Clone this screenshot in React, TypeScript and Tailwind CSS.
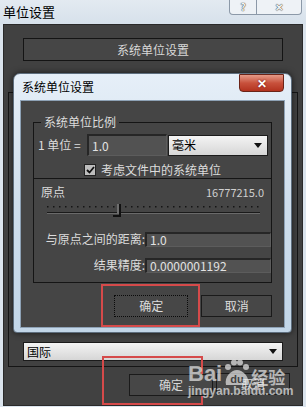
import React from 'react';

const font = { fontFamily: '"Noto Sans CJK SC", "Liberation Sans", sans-serif' };

const Dropdown: React.FC<{ label: string; className?: string }> = ({ label, className }) => (
  <div
    className={`flex items-center justify-between border border-[#1b1b1b] bg-gradient-to-b from-[#f4f4f4] to-[#d6d6d6] pl-[3px] pr-[5px] text-[12px] leading-none text-black ${className ?? ''}`}
  >
    <span>{label}</span>
    <svg width="8" height="5" viewBox="0 0 8 5">
      <path d="M0 0 H8 L4 5 Z" fill="#111" />
    </svg>
  </div>
);

const Field: React.FC<{ value: string; className?: string }> = ({ value, className }) => (
  <div
    className={`flex items-center border-t-2 border-l-2 border-[#262626] border-b border-r border-b-[#5c5c5c] border-r-[#5c5c5c] bg-[#525252] pl-[3px] text-[12px] leading-none text-[#e2e2e2] ${className ?? ''}`}
  >
    {value}
  </div>
);

const Slider: React.FC = () => (
  <svg width="220" height="16" viewBox="0 0 220 16" className="block">
    {Array.from({ length: 36 }).map((_, i) => (
      <rect key={i} x={i * 6} y={2} width="1.5" height="1.5" fill="#151515" />
    ))}
    <line x1="0" y1="8.5" x2="213" y2="8.5" stroke="#1a1a1a" strokeWidth="1" />
    <line x1="0" y1="9.5" x2="213" y2="9.5" stroke="#6a6a6a" strokeWidth="1" />
    <rect x="70" y="0" width="4" height="13" fill="#444" />
    <path d="M73 0 V12 H66" stroke="#111" strokeWidth="2" fill="none" />
    <path d="M71 0 V10" stroke="#9a9a9a" strokeWidth="1" fill="none" />
  </svg>
);

const InnerDialog: React.FC = () => (
  <div className="absolute left-[13px] top-[73px] flex h-[260px] w-[279px] flex-col rounded-t-[7px] rounded-b-[4px] border border-[#5e6e7e] bg-gradient-to-b from-[#e6eff8] via-[#cfdeec] to-[#c2d6e8] shadow-[0_0_6px_rgba(0,0,0,0.6)]">
    <div className="relative flex h-[26px] shrink-0 items-center pl-[8px] text-[12px] text-black">
      系统单位设置
      <div className="absolute right-[7px] top-[0px] flex h-[18px] w-[45px] items-center justify-center rounded-b-[4px] border border-[#6b2418] bg-gradient-to-b from-[#e59a88] via-[#c8513c] to-[#b3321e]">
        <span className="text-[12px] font-bold leading-none text-white [text-shadow:0_0_2px_#600]">✕</span>
      </div>
    </div>
    <div className="mx-[6px] mb-[6px] flex flex-1 flex-col border border-[#8ea2b6] bg-[#454545] px-[12px] pt-[21px] text-[#dcdcdc]">
      <div className="relative border border-[#151515] px-[3px] pb-[2px] pt-[11px]">
        <span className="absolute left-[7px] top-[-9px] bg-[#454545] px-[3px] text-[12px] leading-[16px]">
          系统单位比例
        </span>
        <div className="flex items-center">
          <span className="w-[50px] pl-[1px] text-[12px]">1 单位 =</span>
          <Field value="1.0" className="h-[22px] w-[80px]" />
          <Dropdown label="毫米" className="ml-[1px] h-[21px] w-[100px]" />
        </div>
        <div className="mt-[8px] flex items-center pl-[47px] text-[12px]">
          <span className="flex h-[12px] w-[12px] items-center justify-center border border-[#222] bg-[#bdbdbd]">
            <svg width="9" height="8" viewBox="0 0 9 8">
              <path d="M1 4 L3.5 6.5 L8 1" stroke="#111" strokeWidth="1.8" fill="none" />
            </svg>
          </span>
          <span className="ml-[5px] leading-none">考虑文件中的系统单位</span>
        </div>
      </div>
      <div className="border border-t-0 border-[#151515] pb-[8px] pt-[4px]">
        <div className="flex items-center justify-between pl-[7px] pr-[7px]">
          <span className="text-[12px]">原点</span>
          <span className="text-[11px] text-[#cfcfcf]">16777215.0</span>
        </div>
        <div className="mt-[3px] pl-[13px]">
          <Slider />
        </div>
        <div className="mt-[10px] flex items-center">
          <span className="w-[111px] text-right text-[12px]">与原点之间的距离:</span>
          <Field value="1.0" className="ml-[0px] h-[15px] w-[126px]" />
        </div>
        <div className="mt-[8px] flex items-center">
          <span className="w-[111px] text-right text-[12px]">结果精度:</span>
          <Field value="0.0000001192" className="h-[15px] w-[126px]" />
        </div>
      </div>
      <div className="mt-[1px] flex">
        <div className="ml-[68px] flex h-[43px] w-[101px] items-center justify-end border-2 border-[#d54a4a] pr-[10px]">
          <div className="flex h-[22px] w-[74px] items-center justify-center border border-dotted border-[#0a0a0a] bg-[#474747] text-[12px]">
            确定
          </div>
        </div>
        <div className="mt-[11px] ml-[1px] flex h-[22px] w-[72px] items-center justify-center border border-[#1a1a1a] bg-[#474747] text-[12px]">
          取消
        </div>
      </div>
    </div>
  </div>
);

const Watermark: React.FC = () => (
  <div className="pointer-events-none absolute left-[188px] top-[359px] flex flex-col items-start text-[#e9e9e9] opacity-70">
    <div className="flex items-end">
      <span className="text-[22px] font-bold leading-none" style={{ fontFamily: '"Liberation Sans", sans-serif' }}>
        Bai
      </span>
      <svg width="28" height="28" viewBox="0 0 28 28" className="-mb-[2px]">
        <circle cx="6" cy="8" r="3" fill="#e9e9e9" />
        <circle cx="12" cy="3.5" r="3" fill="#e9e9e9" />
        <circle cx="18" cy="3.5" r="3" fill="#e9e9e9" />
        <circle cx="24" cy="8" r="3" fill="#e9e9e9" />
        <path d="M4 26 C2 18 9 11 15 11 C21 11 28 18 26 26 Z" fill="#e9e9e9" />
        <text x="15" y="24" textAnchor="middle" fontSize="11" fontWeight="bold" fill="#3f3f3f" fontFamily="Liberation Sans, sans-serif">
          du
        </text>
      </svg>
      <span className="ml-[1px] text-[17px] font-bold leading-none" style={font}>
        经验
      </span>
    </div>
    <span className="text-[12px] font-bold leading-none" style={{ fontFamily: '"Liberation Sans", sans-serif' }}>
      jingyan.baidu.com
    </span>
  </div>
);

export default function App() {
  return (
    <div className="relative h-[407px] w-[306px] overflow-hidden bg-[#dbe4ed]" style={font}>
      <div className="flex h-[407px] flex-col">
        <div className="relative flex h-[24px] shrink-0 items-start bg-gradient-to-b from-[#e3eaf1] to-[#d7e1eb] pl-[3px] pt-[3px] text-[13px] leading-[18px] text-black">
          单位设置
          <div className="absolute right-[4px] top-0 flex h-[15px]">
            <div className="flex w-[28px] items-center justify-center rounded-bl-[4px] border border-t-0 border-[#8c99a8] bg-[#eef2f6] text-[10px] font-bold leading-none text-[#f4f4f4] [text-shadow:0_0_1px_#333,0_0_1px_#333]">
              ?
            </div>
            <div className="flex w-[45px] items-center justify-center rounded-br-[4px] border border-l-0 border-t-0 border-[#8c99a8] bg-[#eef2f6] text-[10px] font-bold leading-none text-[#f4f4f4] [text-shadow:0_0_1px_#333,0_0_1px_#333]">
              ✕
            </div>
          </div>
        </div>
        <div className="mx-[3px] mb-[5px] flex flex-1 flex-col border border-[#2a2a2a] bg-[#414141] px-[4px] pt-[13px] text-[#d8d8d8]">
          <div className="mx-[15px] flex h-[23px] items-center justify-center border border-[#141414] bg-[#464646] text-[12px]">
            系统单位设置
          </div>
          <div className="mt-[31px] flex h-[275px] flex-col justify-end border border-[#151515] px-[14px] pb-[5px]">
            <Dropdown label="国际" className="h-[19px]" />
          </div>
          <div className="flex">
            <div className="ml-[94px] mt-[-11px] flex h-[49px] w-[101px] items-end justify-end border-2 border-[#d54a4a] pb-[7px]">
              <div className="mr-[-12px] flex h-[22px] w-[84px] items-center justify-center border border-[#1a1a1a] bg-[#474747] text-[12px]">
                确定
              </div>
            </div>
            <div className="ml-[13px] mt-[6px] flex h-[22px] w-[74px] items-center justify-center border border-[#1a1a1a] bg-[#474747] text-[12px]">
              取消
            </div>
          </div>
        </div>
      </div>
      <InnerDialog />
      <Watermark />
    </div>
  );
}
